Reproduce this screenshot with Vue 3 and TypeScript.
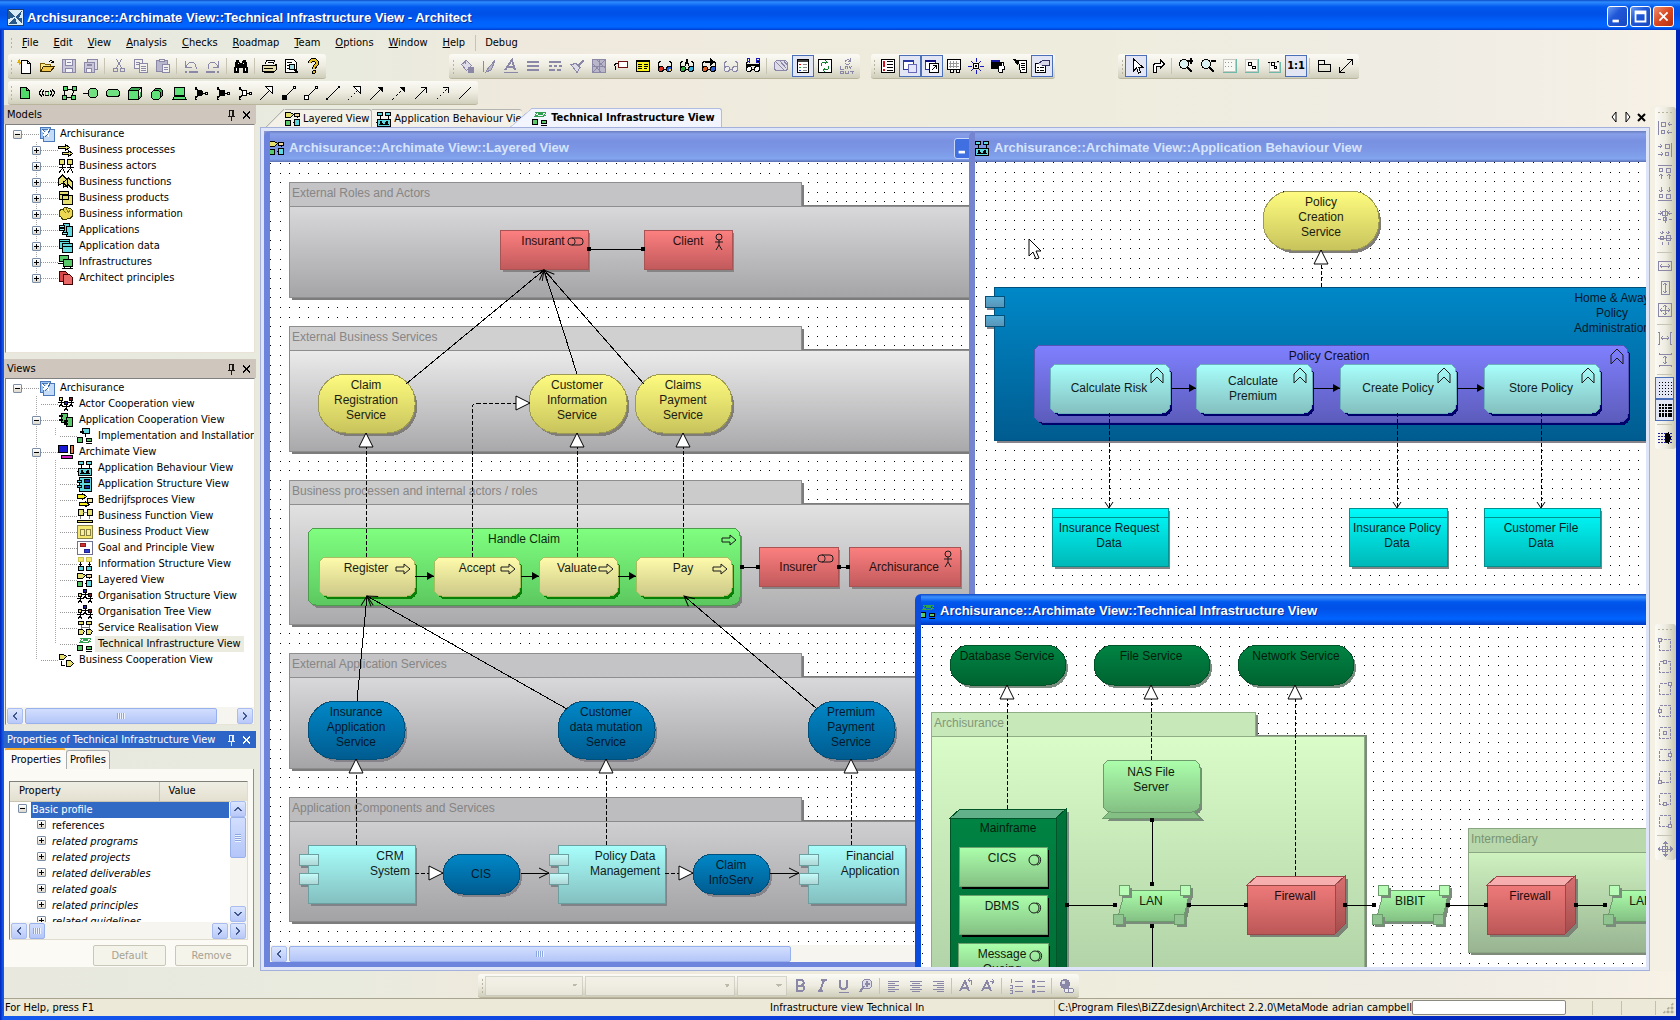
<script setup lang="ts">
const p = (d: string, s = '#000', f = 'none', w = 1) =>
  `<path d="${d}" stroke="${s}" fill="${f}" stroke-width="${w}"/>`
const G = '#8a88a6'
const glasses = (l: string, r: string, s = '#000', extra = '') =>
  p('M1.5 9V5l2-2M14.5 9V5l-2-2M7 11h2', s) +
  `<circle cx="4" cy="11" r="2.5" fill="${l}" stroke="${s}"/><circle cx="12" cy="11" r="2.5" fill="${r}" stroke="${s}"/>` + extra
const man = (x: number, y: number, c: string) =>
  `<circle cx="${x}" cy="${y}" r="2" fill="${c}" stroke="#000"/>` +
  p(`M${x} ${y + 2}v3M${x - 3} ${y + 3}h6M${x} ${y + 5}l-2 3M${x} ${y + 5}l2 3`)
const box = (x: number, y: number, w: number, h: number, f: string, s = '#000') =>
  `<rect x="${x}.5" y="${y}.5" width="${w}" height="${h}" fill="${f}" stroke="${s}"/>`
const oval = (x: number, y: number, f: string) =>
  `<ellipse cx="${x}" cy="${y}" rx="3" ry="2" fill="${f}" stroke="#000"/>`
const magnifier = p('M9 9l5 5', '#000', 'none', 2) +
  '<circle cx="6" cy="6" r="4.5" fill="#d8f0f0" stroke="#000"/>'
const corner = (x: number, y: number) =>
  `<rect x="2.5" y="2.5" width="11" height="11" fill="none" stroke="${G}" stroke-dasharray="3 1"/><rect x="${x}.5" y="${y}.5" width="3" height="3" fill="#ece9d8" stroke="${G}"/>`
const Y = '#e6e070', C = '#5fd8e0', N = '#58c868', R = '#d84848'

const icons: Record<string, string> = {
  app: '<rect width="16" height="16" fill="#d8ecf8" stroke="#20406a"/><path d="M1 1l7 7-7 2zM15 1l-2 7-5 0zM8 8l2 7H1zM8 8l7 1v6z" fill="#2a5a8c"/>',
  chevL: p('M10 4L6 8l4 4', '#40588c', 'none', 2),
  chevR: p('M6 4l4 4-4 4', '#40588c', 'none', 2),
  chevU: p('M4 10l4-4 4 4', '#40588c', 'none', 2),
  chevD: p('M4 6l4 4 4-4', '#40588c', 'none', 2),
  new: p('M4.5 2.5h6l3 3v10h-9z', '#000', '#fff') + p('M10.5 2.5v3h3') + p('M0 4.500h4M2.500 1v6M1 2l3 4', '#e0b000'),
  open: p('M1.5 13.5v-8h4l1 1h5v2', '#7a5a00', '#f8e890') + p('M1.5 13.5l3-5h11l-4 5z', '#3a2a00', '#f0c850') + p('M10 4c2-3 4-1 4 1M12 4l2 1 1-2'),
  save: p('M1.5 1.5h13v13h-13z', G, '#c8c6d8') + box(4, 1, 7, 6, '#f4f4f8', G) + box(4, 10, 7, 4, '#f4f4f8', G) + p('M6 4.500h4', G),
  saveAll: p('M4.5 1.5h10v10h-10z', G, '#dddce8') + p('M1.5 4.5h10v10h-10z', G, '#c8c6d8') + box(3, 10, 5, 4, '#f4f4f8', G) + p('M4 6.500h5', G, 'none', 2),
  cut: p('M5.500 1l5 9M10.500 1l-5 9', G) + `<circle cx="4.500" cy="12" r="2" fill="none" stroke="${G}"/><circle cx="11.500" cy="12" r="2" fill="none" stroke="${G}"/>`,
  copy: box(1, 1, 8, 9, '#f2f1ee', G) + box(6, 5, 8, 9, '#f2f1ee', G) + p('M8 8.500h5M8 10.500h5M8 12.500h5M3 4.500h4M3 6.500h3', G),
  paste: box(1, 2, 11, 11, '#b8b6cc', G) + box(4, 1, 5, 2, '#eee', G) + box(7, 6, 7, 8, '#f2f1ee', G) + p('M9 9.500h4M9 11.500h4', G),
  undo: p('M2.500 3v6h6M3 9c2-6 10-6 10 0v2', G) + p('M2 14h2M6 14h9', G, 'none', 2),
  redo: p('M13.500 3v6h-6M13 9c-2-6-10-6-10 0v2', G) + p('M1 14h9M12 14h2', G, 'none', 2),
  find: '<path d="M3 2h3l1 3h2l1-3h3l2 9v4h-5v-5H6v5H1v-4z"/>' + p('M3.500 10v3M12.500 10v3M5 5h1M10 5h1', '#fff'),
  print: p('M4 6l2-4h8l-2 4', '#000', '#fff') + p('M1.5 7.5h12l2-1v5l-2 2h-12z', '#000', '#e4dca8') + p('M3 10.500h9M3 14.500h10M7 4.500h5'),
  preview: p('M2.500 1.500h8l3 3v10h-11z', '#000', '#fff') + p('M4 4.500h5M4 7.500h3M4 10.500h3') + '<circle cx="9" cy="9" r="3" fill="#a8e0e8" stroke="#000"/>' + p('M11 11l4 4', '#000', 'none', 2),
  help: p('M5 5c0-4 7-4 7 0 0 3-3 2-3 6', '#000', 'none', 4) + p('M5 5c0-4 7-4 7 0 0 3-3 2-3 6', '#e8c020', 'none', 2) + '<circle cx="9" cy="14" r="1.500" fill="#e8c020" stroke="#000"/>',
  artifact: p('M3.500 2.500h6l3 3v8h-9z', '#000', '#50d868') + p('M9.500 2.500v3h3'),
  path: p('M3 4L0 8l3 4M5 5L3 8l2 3M13 4l3 4-3 4M11 5l2 3-2 3') + '<path d="M6 7h1v3H6zM9 7h1v3H9z" fill="#30a848"/>' + p('M6 6.500h4M6 10.500h4'),
  network: p('M4 4.500h8M12.500 4l-1 8M3.500 4v8M3 12.500h9') + box(2, 1, 4, 4, '#50d868') + box(11, 1, 4, 4, '#50d868') + box(1, 10, 4, 4, '#50d868') + box(10, 10, 4, 4, '#50d868'),
  iface: p('M0 8.500h6') + '<circle cx="10" cy="8" r="5" fill="#70e080" stroke="#000"/>',
  service: '<rect x="1.500" y="4.500" width="13" height="7" rx="3" fill="#70e080" stroke="#000"/>',
  node: p('M1.500 5.500h10v9h-10z', '#000', '#60e078') + p('M1.500 5.500l3-3h10l-3 3zM11.500 14.500l3-3v-9', '#000', '#3aa850'),
  sysware: '<circle cx="9" cy="8" r="5" fill="#3aa850" stroke="#000"/><circle cx="7" cy="10" r="5" fill="#60e078" stroke="#000"/>',
  device: '<rect x="3.500" y="2.500" width="10" height="8" rx="1" fill="#60e078" stroke="#000"/>' + p('M1.500 14.500l2-3h10l2 3z', '#000', '#60e078'),
  junA: p('M2 2l4 5M2 14l4-5M2 2v3M2 14v-3M8 8.500h4M2 2h2M2 14h2') + '<circle cx="7" cy="8" r="3"/>' + box(12, 7, 2, 2, '#fff'),
  junB: p('M2 2l4 5M2 14l4-5M2 2v3M2 14v-3M8 8.500h4M2 2h2M2 14h2') + '<rect x="4" y="5" width="6" height="6"/>' + box(12, 7, 2, 2, '#fff'),
  junC: p('M2 2l4 5M2 14l4-5M2 2v3M2 14v-3M8 8.500h4M2 2h2M2 14h2') + box(5, 5, 4, 5, '#fff') + box(12, 7, 2, 2, '#fff'),
  specialise: p('M1 15L10 6') + p('M6.500 1.500h7v7z', '#000', '#fff'),
  compose: p('M3 13L13 3') + '<rect x="1" y="10" width="5" height="5"/>' + box(12, 1, 2, 2, '#fff'),
  aggregate: p('M5 11L13 3') + box(1, 10, 4, 4, '#fff') + box(12, 1, 2, 2, '#fff'),
  assign: p('M2 14L14 2') + '<rect x="1" y="13" width="2" height="2"/><rect x="13" y="1" width="2" height="2"/>',
  realise: '<path d="M1 15L10 6" stroke="#000" stroke-dasharray="2 2"/>' + p('M6.500 1.500h7v7z', '#000', '#fff'),
  trigger: p('M1 15L12 4') + '<path d="M8 2h6v6z"/>',
  flow: '<path d="M1 15L12 4" stroke="#000" stroke-dasharray="3 2"/><path d="M8 2h6v6z"/>',
  use: p('M2 14L13 3M8 2.500h5.500V8'),
  access: '<path d="M2 14L13 3" stroke="#000" stroke-dasharray="2 2"/>' + p('M8 2.500h5.500V8'),
  associate: p('M2 14L14 2'),
  fill: p('M2.500 6.500l5-4 5 5-5 5z', G, '#dddce8') + p('M6.500 6V2', G) + `<path d="M9 9h6v6H9z" fill="${G}"/>`,
  pen: p('M2.500 3v11M14 2L8 10', G) + p('M8 9l-3 5 5-2 4-9', G, '#b8b6c8'),
  fontA: p('M2 12L9 2l3 10M5 9h6', G, 'none', 2) + p('M1 14.500h14', G),
  lines: p('M2 4h12M2 8h12M2 12h12', G, 'none', 2),
  dashes: p('M2 4h12M2 8h3M7 8h3M12 8h3M2 12h6M10 12h4', G, 'none', 2),
  brush: p('M9 7l5-5 1 1-5 5', G, G) + p('M2 6.500l5-1 4 4-3 5-6-8z', G, '#dddce8'),
  pattern: box(1, 1, 13, 13, '#b8b6c8', G) + p('M1 5l9 9M5 1l9 9M14 2L2 14M8.500 1v13M1 8.500h13', G),
  tag: p('M3 12C0 4 4 5 6 5') + '<rect x="5.500" y="3.500" width="9" height="6" rx="1" fill="#fff" stroke="#701010"/>',
  note: box(1, 2, 13, 11, '#f8f020') + p('M3 6.500h4M9 6.500h4M3 8.500h4M9 8.500h4M3 10.500h4M9 10.500h3M2 3.500h12'),
  glassesRgb: glasses('#e03020', '#2060e0', '#000', '<circle cx="13" cy="12" r="1.500" fill="#f0d020"/>'),
  glassesA: glasses('#30b040', '#30b0e0', '#000', p('M6 8l2-7 2 7M7 5h3')),
  glassesArrow: glasses('#e06020', '#3060d0', '#000', p('M4 4h7', '#000', 'none', 2) + '<path d="M9 0l5 4-5 4z"/>'),
  glassesGray: glasses('#eee', '#eee', G),
  glassesAb: glasses('#fff', '#fff', '#000', p('M2 5l1-5h1l1 5M2 3h3M11.500 0v4h3V0zM11 2h3', '#1818c0') + p('M1 7h14', '#000', 'none', 2)),
  hatch: `<rect x="1.500" y="2.500" width="13" height="10" rx="3" fill="#dddce8" stroke="${G}"/>` + p('M3 4l8 8M7 3l6 7M11 3l3 4', G),
  legend: box(2, 1, 11, 13, '#fff') + '<path d="M3 2h10v2H3z" fill="#404040"/><path d="M4 6h2v1H4z" fill="red"/><path d="M4 9h2v1H4z" fill="#28b040"/><path d="M4 12h2v1H4z" fill="#2040e0"/>' + p('M8 6.500h4M8 9.500h4M8 12.500h4', '#888'),
  refresh: box(1, 1, 13, 13, '#fff') + p('M4.500 8V6c0-2 3-2 6-2M8 2l2 2-2 2M11.500 8v2c0 2-3 2-6 2M8 10l-2 2 2 2', '#108030'),
  relayout: p('M6 4c1-3 4-3 5-1M11 0v3H9M11 5c-1 2-4 2-5 0', G) + p('M1.500 8v3h3M6 11V8h2v3M10 8l1 2 2-2M11 10v1M1.500 13h3v2h-3zM6.500 13v2h3v-2M11 13h4M13 13v3', G),
  report: box(1, 1, 13, 13, '#fff') + p('M7 3.500h6M7 6.500h6M7 9.500h6M7 12.500h6') + p('M4 3v6M3 12h2', '#d01020', 'none', 2),
  winA: box(1, 2, 10, 9, '#fff', '#2838a0') + p('M1 3h11', '#2838a0', 'none', 2) + box(6, 6, 8, 8, '#e4e4fa', '#6868b8'),
  winB: box(1, 2, 10, 9, '#fff', '#2838a0') + p('M1 3h11', '#101080', 'none', 2) + box(5, 5, 9, 9, '#fff') + p('M8 12l4-4M9 7.500h3.500V11'),
  gridWin: box(1, 1, 13, 10, '#fff') + p('M4.500 3v7M7.500 3v7M10.500 3v7M3 5.500h10M3 8.500h10', '#999') + box(4, 11, 3, 3, '#fff') + box(10, 11, 3, 3, '#fff'),
  crosshair: '<circle cx="8" cy="8" r="3" fill="#fff" stroke="#000"/>' + p('M8.500 0v4M8.500 12v4M0 8.500h4M12 8.500h4M3 3l2 2M11 11l2 2M13 3l-2 2M3 13l2-2', '#1818c0') + '<circle cx="8" cy="8" r="1"/>',
  profile: '<path d="M1 2h9v9H1z"/><path d="M1 2h9v2H1z" fill="#1818a0"/>' + p('M8 4h5l1 4v3h-2v3H9l-1-4z', '#000', '#fff') + '<path d="M8 4h4v4H8z"/>',
  script: p('M6.500 2.500h8v12h-6z', '#000', '#fff') + '<path d="M1 1l5 1v6z"/>' + p('M9 5.500h4M9 7.500h4M9 9.500h4M10 11.500h3'),
  props: box(1, 5, 10, 9, '#fff') + p('M3 9.500h2M6 9.500h4M3 12.500h2M6 12.500h4') + p('M4 6l5-4h6v5h-4l-3 1', '#303060', '#d8d8ea'),
  pointer: p('M5.500 1v12l3-3 2 5 2-1-2-5h4z', '#000', '#fff'),
  bend: p('M3.500 14v-7l2-2h5V2l4 4-4 4V8h-4v6z', '#000', '#fff'),
  zoomIn: magnifier + p('M10 3h5M12.500 0v6', '#000', 'none', 2),
  zoomOut: magnifier + p('M11 3h5', '#000', 'none', 2),
  fitA: box(1, 1, 12, 12, '#f8f8f4', '#c8c8c0') + p('M1 14.500h13.500V1', '#70b8a8') + p('M3 4.500h1M6 4.500h1M9 4.500h1M3 8.500h1M6 8.500h1M9 8.500h1', '#999'),
  fitB: box(1, 1, 12, 12, '#f8f8f4', '#c8c8c0') + p('M1 14.500h13.500V1', '#70b8a8') + box(4, 4, 3, 3, '#fff') + box(8, 8, 3, 2, '#fff'),
  fitC: box(3, 4, 10, 9, '#f8f8f4', '#c8c8c0') + p('M3 14.500h11.500V4', '#70b8a8') + p('M2 4.500h2M11 3.500h2') + box(5, 4, 3, 3, '#fff') + box(8, 8, 2, 2, '#fff'),
  pkg: p('M2.500 2.500h6v4h6v7h-12zM2.500 6.500h6'),
  diag: p('M2 14L14 2M9 1.500h5.500V7M1.500 9v5.500H7'),
  root: box(1, 1, 10, 11, '#9cc4f0', '#4a78b8') + box(4, 3, 11, 12, '#c4dcf8', '#4a78b8') + p('M3 4l7 6M10 4l-6 6', '#fff', 'none', 2) + p('M3 3l3 3M11 4l-2 3M6 11l3-3', '#3a68a8'),
  process: p('M.5 4.500h7v-2l4 3-4 3v-2h-7zM4.500 10.500h6v-2l4 3-4 3v-2h-6z', '#000', Y),
  actors: '<circle cx="4" cy="4" r="3" fill="#e6e070" stroke="#000"/><circle cx="12" cy="4" r="3" fill="#e6e070" stroke="#000"/>' + p('M4.500 7v4M1 9.500h7M4 11l-3 4M5 11l2 4M12.500 7v4M9 9.500h7M12 11l-3 4M13 11l2 4'),
  functions: p('M.5 11V5l4-4 5 5v7l-4-4zM5.500 13V8l5-4 4 4v7l-4-4z', '#000', Y),
  products: box(1, 1, 9, 8, Y) + box(4, 5, 10, 9, Y) + p('M1 4.500h9M4 9.500h6V5'),
  info: p('M2 8c-2-3 1-5 3-4 1-4 5-3 6-1 4-1 4 3 3 4 2 4-2 6-4 5-2 3-6 2-7-1-2 0-2-2-1-3z', '#3a3a00', '#ecd850') + p('M5 4l3 3M8 2l2 4M12 4l-2 3', '#8a7a20'),
  applications: box(5, 1, 6, 9, C) + box(8, 4, 6, 10, C) + box(1, 3, 5, 2, '#9ff0f0') + box(1, 6, 5, 2, '#9ff0f0') + box(4, 10, 5, 2, '#9ff0f0'),
  appData: box(1, 1, 10, 9, C) + box(4, 5, 10, 9, C) + p('M1 3.500h10M4 8.500h10'),
  infra: box(1, 1, 9, 6, N) + box(5, 5, 9, 7, N) + p('M0 9.500h5M4 14.500h11M6 12v2M12 12v2'),
  principle: p('M1.500 1.500h6l3 3v7h-9z', '#400', R) + p('M5.500 4.500h6l3 3v7h-9z', '#400', '#e86868'),
  actorCoop: man(3, 3, Y) + man(13, 3, '#802020') + man(8, 7, '#2020a0'),
  appCoop: box(3, 1, 6, 9, N) + box(8, 5, 6, 9, N) + box(1, 3, 3, 1, '#9fe') + box(1, 7, 3, 1, '#9fe') + box(6, 8, 3, 1, '#9fe') + box(6, 11, 3, 1, '#9fe'),
  impl: box(5, 0, 7, 5, C) + box(0, 9, 5, 5, N) + oval(12, 12, N) + p('M3 4h3M8.500 6v3M9 15.500h6') + box(3, 3, 3, 1, C),
  archimate: box(0, 1, 9, 7, '#1818d0') + box(12, 1, 3, 8, '#f07838') + box(3, 11, 11, 3, '#d020c0'),
  behaviour: oval(4, 3, C) + oval(12, 3, C) + box(1, 8, 13, 7, C) + '<path d="M3 14l2-5 3 5zM8 14l3-5 2 5z"/>' + p('M4.500 5v4M12.500 5v4M0 11.500h2'),
  structure: box(2, 1, 12, 14, C) + box(7, 3, 5, 3, '#1030a0') + box(7, 9, 5, 3, '#1030a0') + box(0, 4, 4, 2, C) + box(0, 9, 4, 2, C),
  bedrijf: p('M.5 2.500h5v-1l4 3-4 3v-1h-5zM2.500 10.500h6v-1l4 3-4 2v-1h-6z', '#000', '#f8f020') + box(10, 6, 5, 4, '#f0e8a0'),
  bFunction: box(1, 1, 5, 6, Y) + box(10, 1, 5, 6, Y) + box(0, 12, 15, 2, Y) + p('M6 4.500h4M3.500 8v3M12.500 8v3', '#777'),
  bProduct: box(0, 1, 15, 13, '#f4e870', '#8a8240') + box(3, 5, 4, 6, '#f8f0a0', '#8a8240') + box(9, 5, 4, 6, '#f8f0a0', '#8a8240'),
  goal: box(0, 1, 15, 13, '#fff', '#707090') + p('M3.500 3.500h5v3h-5z', '#902020', '#d03030') + p('M7.500 9.500h5v3h-5z', '#202090', '#3040d0'),
  infoStruct: box(1, 1, 5, 4, '#f4e870', '#c8c050') + box(9, 1, 5, 4, '#f4e870', '#c8c050') + p('M3.500 6v4M12.500 6v4M2 8.500h3M11 8.500h3') + box(1, 10, 5, 4, C) + box(9, 10, 5, 4, C),
  layered: p('M.5 1.500h5l3 2-3 3h-5z', '#000', Y) + oval(12, 4, '#f0d8a0') + box(0, 9, 5, 5, N) + box(9, 8, 5, 6, C) + p('M8 11.500h2M12 7V6'),
  orgS: man(3, 7, Y) + man(8, 3, '#2020a0') + man(13, 7, '#802020'),
  serviceReal: oval(4, 3, Y) + oval(12, 3, Y) + p('M4.500 5v4M12.500 5v4M4 7.500h8', '#777') + p('M1.500 9.500h4l2 2-2 3h-4zM9.500 9.500h4l2 2-2 3h-4z', '#000', Y),
  tech: p('M3 6l2-4h9l-2 4zM3 2l11 4M3 6L14 2', '#30a050') + box(0, 9, 5, 5, N) + oval(12, 12, N) + p('M9 15.500h6'),
  bCoop: p('M1.500 2.500h4l3 2-3 3h-4zM8.500 8.500h4l3 3-3 3h-4z', '#000', Y) + p('M3.500 9v4h3M10 3.500h3'),
  pin: p('M4 9.500h8M5.500 9V2.500h5V9M9.500 3v6M8.500 10v5', 'currentColor'),
  close: p('M4 4l8 8M12 4l-8 8', 'currentColor', 'none', 2),
  bold: p('M5 2v11h4c4 0 4-5 0-5.500 4-1 3-5.500 0-5.500zM5 7.500h4', G, 'none', 2),
  italic: p('M10 2L6 13M7 2h6M4 13h5', G, 'none', 2),
  underline: p('M4 2v6c0 4 7 4 7 0V2', G, 'none', 2) + p('M3 14.500h10', G),
  color: `<circle cx="9" cy="6" r="5" fill="#dddce8" stroke="${G}"/>` + p('M6 8l-4 6M9 3v6M7 6h5', G, 'none', 2),
  alignL: p('M2 3.500h11M2 5.500h7M2 7.500h11M2 9.500h7M2 11.500h11M2 13.500h7', G),
  alignC: p('M2 3.500h12M4 5.500h8M2 7.500h12M4 9.500h8M2 11.500h12M4 13.500h8', G),
  alignR: p('M3 3.500h11M7 5.500h7M3 7.500h11M7 9.500h7M3 11.500h11M7 13.500h7', G),
  fontUp: p('M2 13L7 3l4 10M4 10h6', G, 'none', 2) + p('M10 2.500h3.500V7M12 0l-2 2 2 2', G),
  fontDown: p('M2 13L7 3l4 10M4 10h6', G, 'none', 2) + p('M10 3.500h4M12 1l2 2-2 3', G),
  numbered: p('M7 3.500h8M7 8.500h8M7 13.500h8M3.500 1v4M2 7.500h2v3H2M2 12.500h2v3H2', G),
  bullets: p('M7 3.500h8M7 8.500h8M7 13.500h8', G) + `<path d="M2 2h3v3H2zM2 7h3v3H2zM2 12h3v3H2z" fill="${G}"/>`,
  globe: `<circle cx="7" cy="6" r="5" fill="${G}"/><path d="M4 3h3v3H4z" fill="#dddce8"/><rect x="6.500" y="10.500" width="5" height="4" rx="2" fill="#eee" stroke="${G}"/><rect x="10.500" y="10.500" width="5" height="4" rx="2" fill="#eee" stroke="${G}"/>`,
  alLeft: p('M1.500 1v14M15 4.500h-4M13 2l-2 2 2 2M15 12.500h-5M12 10l-2 2 2 2', G) + box(4, 2, 4, 4, 'none', G) + `<circle cx="6" cy="12" r="2" fill="none" stroke="${G}"/>`,
  alRight: p('M14.500 1v14M1 4.500h4M3 2l2 2-2 2M1 12.500h5M4 10l2 2-2 2', G) + box(8, 2, 4, 4, 'none', G) + `<circle cx="10" cy="12" r="2" fill="none" stroke="${G}"/>`,
  alTop: p('M1 1.500h14M4.500 15v-5M2 12l2-2 2 2M12.500 15v-5M10 12l2-2 2 2', G) + box(9, 4, 4, 4, 'none', G) + `<circle cx="4" cy="6" r="2" fill="none" stroke="${G}"/>`,
  alBottom: p('M1 14.500h14M4.500 1v5M2 4l2 2 2-2M12.500 1v5M10 4l2 2 2-2', G) + box(9, 8, 4, 4, 'none', G) + `<circle cx="4" cy="10" r="2" fill="none" stroke="${G}"/>`,
  alMidH: p('M8.500 1v14M1 5.500h3M15 5.500h-3M1 11.500h3M15 11.500h-3M3 3l2 2-2 2M13 3l-2 2 2 2', G) + box(5, 3, 5, 4, 'none', G) + `<circle cx="8" cy="11" r="2" fill="none" stroke="${G}"/>`,
  alMidV: p('M1 8.500h14M5.500 1v3M5.500 15v-3M11.500 1v3M11.500 15v-3M3 2l2 2 2-2M9 2l2 2 2-2', G) + box(9, 5, 4, 5, 'none', G) + `<circle cx="5" cy="8" r="2" fill="none" stroke="${G}"/>`,
  sizeW: box(1, 3, 13, 9, 'none', G) + p('M3 8.500h10M5 6L3 8l2 2M11 6l2 2-2 2', G),
  sizeH: box(4, 1, 8, 13, 'none', G) + p('M8.500 3v10M6 5l2-2 2 2M6 11l2 2 2-2', G),
  sizeB: box(1, 1, 13, 13, 'none', G) + p('M8.500 3v10M3 8.500h10M6 5l2-2 2 2M6 11l2 2 2-2M5 6L3 8l2 2M11 6l2 2-2 2', G),
  distH: p('M1 2.500h1.500v12H1M15 2.500h-1.500v12H15M4 8.500h8M6 6L4 8l2 2M10 6l2 2-2 2', G),
  distV: p('M2.500 1v1.500h12V1M2.500 15v-1.500h12V15M8.500 4v8M6 6l2-2 2 2M6 10l2 2 2-2', G),
  gridDots: '<path d="M2 2.500h13M2 5.500h13M2 8.500h13M2 11.500h13M2 14.500h13" stroke="#000" stroke-dasharray="1 2"/>',
  gridFull: '<path d="M2 2h13v13H2z"/><path d="M2 4.500h13M2 7.500h13M2 10.500h13M4.500 2v13M7.500 2v13M10.500 2v13" stroke="#e2e6f4"/>',
  snap: '<path d="M1 3.500h14M1 6.500h14M1 9.500h14M1 12.500h14" stroke="#2020a0" stroke-dasharray="2 1"/><path d="M8 4l4-2 2 6-2 6-4-2z"/>',
  cTL: corner(1, 1), cT: corner(6, 1), cTR: corner(11, 1), cL: corner(1, 6), cC: corner(6, 6),
  cR: corner(11, 6), cBL: corner(1, 11), cB: corner(6, 11), cBR: corner(11, 11),
  move: `<path d="M8 0l3 3H5zM8 16l3-3H5zM0 8l3-3v6zM16 8l-3-3v6z" fill="${G}"/>` + p('M8.500 2v12M2 8.500h12M5.500 5.500h5v5h-5z', G),
}

const menus = ['File', 'Edit', 'View', 'Analysis', 'Checks', 'Roadmap', 'Team', 'Options', 'Window', 'Help']

// "|" is a separator, a leading "*" marks a pressed button
const bars = {
  standard: 'new open save saveAll | cut copy paste | undo redo | find | print preview help'.split(' '),
  style: 'fill pen fontA lines dashes brush pattern tag note glassesRgb glassesA glassesArrow glassesGray glassesAb | hatch *legend refresh relayout'.split(' '),
  panes: 'report *winA *winB gridWin crosshair profile script *props'.split(' '),
  zoom: '*pointer bend | zoomIn zoomOut fitA fitB fitC *one | pkg diag'.split(' '),
  shapes: 'artifact path network iface service node sysware device junA junB junC specialise compose aggregate assign realise trigger flow use access associate'.split(' '),
  align: 'alLeft alRight alTop alBottom alMidH alMidV | sizeW sizeH sizeB | distH distV | *gridDots *gridFull | snap'.split(' '),
  anchor: 'cTL cT cTR cL cC cR cBL cB cBR | move'.split(' '),
  text: 'bold italic underline color | alignL alignC alignR | fontUp fontDown | numbered bullets | globe'.split(' '),
}
const topBars = [
  { name: 'standard', items: bars.standard },
  { name: 'style', items: bars.style },
  { name: 'panes', items: bars.panes },
  { name: 'zoom', items: bars.zoom },
]
const bare = (s: string) => s.replace('*', '')

interface Row { label: string; icon: string; level: number; box?: string; last?: boolean; selected?: boolean }
const models: Row[] = [
  { label: 'Archisurance', icon: 'root', level: 0, box: '-' },
  { label: 'Business processes', icon: 'process', level: 1, box: '+' },
  { label: 'Business actors', icon: 'actors', level: 1, box: '+' },
  { label: 'Business functions', icon: 'functions', level: 1, box: '+' },
  { label: 'Business products', icon: 'products', level: 1, box: '+' },
  { label: 'Business information', icon: 'info', level: 1, box: '+' },
  { label: 'Applications', icon: 'applications', level: 1, box: '+' },
  { label: 'Application data', icon: 'appData', level: 1, box: '+' },
  { label: 'Infrastructures', icon: 'infra', level: 1, box: '+' },
  { label: 'Architect principles', icon: 'principle', level: 1, box: '+', last: true },
]
const views: Row[] = [
  { label: 'Archisurance', icon: 'root', level: 0, box: '-' },
  { label: 'Actor Cooperation view', icon: 'actorCoop', level: 1 },
  { label: 'Application Cooperation View', icon: 'appCoop', level: 1, box: '-' },
  { label: 'Implementation and Installation View', icon: 'impl', level: 2, last: true },
  { label: 'Archimate View', icon: 'archimate', level: 1, box: '-' },
  { label: 'Application Behaviour View', icon: 'behaviour', level: 2 },
  { label: 'Application Structure View', icon: 'structure', level: 2 },
  { label: 'Bedrijfsproces View', icon: 'bedrijf', level: 2 },
  { label: 'Business Function View', icon: 'bFunction', level: 2 },
  { label: 'Business Product View', icon: 'bProduct', level: 2 },
  { label: 'Goal and Principle View', icon: 'goal', level: 2 },
  { label: 'Information Structure View', icon: 'infoStruct', level: 2 },
  { label: 'Layered View', icon: 'layered', level: 2 },
  { label: 'Organisation Structure View', icon: 'orgS', level: 2 },
  { label: 'Organisation Tree View', icon: 'orgS', level: 2 },
  { label: 'Service Realisation View', icon: 'serviceReal', level: 2 },
  { label: 'Technical Infrastructure View', icon: 'tech', level: 2, last: true, selected: true },
  { label: 'Business Cooperation View', icon: 'bCoop', level: 1, last: true },
]
const panels = [
  { title: 'Models', rows: models, scroll: false },
  { title: 'Views', rows: views, scroll: true },
]
const related = ['references', 'related programs', 'related projects', 'related deliverables', 'related goals', 'related principles', 'related guidelines']

// grid points fall every 48/5 px, rounded to whole pixels
const steps = [0, 10, 19, 29, 38]
const dots = steps.flatMap(y => steps.map(x => `M${x} ${y}h1v1h-1z`)).join('')

interface Group { x: number; y: number; tab: number; w: number; h: number; title: string; tone: string }
interface Glyph { k: string; x: number; y: number }
interface Shape {
  k: string; x: number; y: number; w: number; h: number; r?: number; tone: string
  text: string[]; tx: number; ty: number; glyph?: Glyph
}
interface Wire { d: string; end?: string; start?: string; dash?: boolean }
interface Sheet { name: string; title: string; icon: string; ox: number; oy: number; dx: number; dy: number; scroll?: boolean; groups: Group[]; shapes: Shape[]; wires: Wire[] }

const glyphs: Record<string, string> = {
  role: '<rect x="0" y="0" width="15" height="7" rx="3"/><path d="M4 0c4 0 4 7 0 7"/>',
  actor: '<circle cx="4" cy="3" r="3"/><path d="M4 6v5M0 8h8M4 11l-3 5M4 11l3 5"/>',
  arrow: '<path d="M0 3h8V0l6 5-6 5V7H0z"/>',
  chevron: '<path d="M0 15V6l6-6 6 6v9l-6-6z"/>',
  disc: '<circle cx="5" cy="6" r="5"/><path d="M7 1c6 0 6 9 1 10"/>',
}

const s = (k: string, x: number, y: number, w: number, h: number, tone: string, text: string[], tx: number, ty: number, r = 0, glyph?: Glyph): Shape =>
  ({ k, x, y, w, h, tone, text, tx, ty, r, glyph })

const layered: Sheet = {
  name: 'layered', title: 'Archisurance::Archimate View::Layered View', icon: 'layered', ox: 270, oy: 162, dx: 270, dy: 163, scroll: true,
  groups: [
    { x: 289, y: 182, tab: 512, w: 900, h: 115, title: 'External Roles and Actors', tone: 'gray' },
    { x: 289, y: 326, tab: 512, w: 900, h: 125, title: 'External Business Services', tone: 'pale' },
    { x: 289, y: 480, tab: 512, w: 900, h: 144, title: 'Business processen and internal actors / roles', tone: 'soft' },
    { x: 289, y: 653, tab: 512, w: 900, h: 115, title: 'External Application Services', tone: 'gray' },
    { x: 289, y: 797, tab: 512, w: 900, h: 124, title: 'Application Components and Services', tone: 'dim' },
  ],
  shapes: [
    s('box', 500, 230, 88, 39, 'red', ['Insurant'], 543, 245, 0, { k: 'role', x: 568, y: 238 }),
    s('box', 644, 230, 88, 39, 'red', ['Client'], 688, 245, 0, { k: 'actor', x: 715, y: 234 }),
    s('box', 318, 374, 97, 59, 'yellow', ['Claim', 'Registration', 'Service'], 366, 389, 28),
    s('box', 529, 374, 98, 59, 'yellow', ['Customer', 'Information', 'Service'], 577, 389, 28),
    s('box', 635, 374, 97, 59, 'yellow', ['Claims', 'Payment', 'Service'], 683, 389, 28),
    s('box', 308, 528, 432, 77, 'lime', ['Handle Claim'], 524, 543, 8, { k: 'arrow', x: 722, y: 535 }),
    s('box', 319, 557, 96, 39, 'cream', ['Register'], 366, 572, 8, { k: 'arrow', x: 396, y: 564 }),
    s('box', 434, 557, 86, 39, 'cream', ['Accept'], 477, 572, 8, { k: 'arrow', x: 501, y: 564 }),
    s('box', 539, 557, 79, 39, 'cream', ['Valuate'], 577, 572, 8, { k: 'arrow', x: 599, y: 564 }),
    s('box', 636, 557, 96, 39, 'cream', ['Pay'], 683, 572, 8, { k: 'arrow', x: 713, y: 564 }),
    s('box', 759, 547, 79, 39, 'red', ['Insurer'], 798, 571, 0, { k: 'role', x: 818, y: 555 }),
    s('box', 849, 547, 111, 39, 'red', ['Archisurance'], 904, 571, 0, { k: 'actor', x: 944, y: 551 }),
    s('box', 308, 701, 97, 58, 'blue', ['Insurance', 'Application', 'Service'], 356, 716, 28),
    s('box', 558, 701, 97, 58, 'blue', ['Customer', 'data mutation', 'Service'], 606, 716, 28),
    s('box', 808, 701, 87, 58, 'blue', ['Premium', 'Payment', 'Service'], 851, 716, 28),
    s('comp', 308, 845, 107, 58, 'aqua', ['CRM', 'System'], 390, 860),
    s('box', 443, 854, 77, 40, 'blue', ['CIS'], 481, 878, 20),
    s('comp', 558, 845, 107, 58, 'aqua', ['Policy Data', 'Management'], 625, 860),
    s('box', 693, 854, 77, 40, 'blue', ['Claim', 'InfoServ'], 731, 869, 20),
    s('comp', 808, 845, 97, 58, 'aqua', ['Financial', 'Application'], 870, 860),
  ],
  wires: [
    { d: 'M589 249H643', start: 'sq', end: 'sq' },
    { d: 'M406 384L544 270', end: 'open' },
    { d: 'M577 374L544 270', end: 'open' },
    { d: 'M644 384L544 270', end: 'open' },
    { d: 'M366 557V433', end: 'tri', dash: true },
    { d: 'M472 557V409Q472 403 478 403H530', end: 'tri', dash: true },
    { d: 'M577 557V433', end: 'tri', dash: true },
    { d: 'M683 557V433', end: 'tri', dash: true },
    { d: 'M415 576H434', end: 'solid' },
    { d: 'M521 576H539', end: 'solid' },
    { d: 'M618 576H636', end: 'solid' },
    { d: 'M742 567H758', start: 'sq', end: 'sq' },
    { d: 'M839 567H848', start: 'sq', end: 'sq' },
    { d: 'M357 701L367 596', end: 'open' },
    { d: 'M567 709L367 596', end: 'open' },
    { d: 'M816 708L684 596', end: 'open' },
    { d: 'M356 845V759', end: 'tri', dash: true },
    { d: 'M606 845V759', end: 'tri', dash: true },
    { d: 'M851 845V759', end: 'tri', dash: true },
    { d: 'M415 873H443', end: 'tri', dash: true },
    { d: 'M665 873H693', end: 'tri', dash: true },
    { d: 'M521 873H549', end: 'open' },
    { d: 'M770 873H799', end: 'open' },
  ],
}

const behaviour: Sheet = {
  name: 'behaviour', title: 'Archisurance::Archimate View::Application Behaviour View', icon: 'behaviour', ox: 975, oy: 162, dx: 976, dy: 162,
  groups: [],
  shapes: [
    s('box', 1263, 191, 116, 59, 'yellow', ['Policy', 'Creation', 'Service'], 1321, 206, 28),
    s('comp', 994, 287, 720, 153, 'blue', ['Home & Away', 'Policy', 'Administration'], 1612, 302),
    s('box', 1034, 345, 594, 77, 'violet', ['Policy Creation'], 1329, 360, 8, { k: 'chevron', x: 1611, y: 349 }),
    s('box', 1050, 364, 120, 49, 'mist', ['Calculate Risk'], 1109, 392, 8, { k: 'chevron', x: 1151, y: 368 }),
    s('box', 1196, 364, 116, 49, 'mist', ['Calculate', 'Premium'], 1253, 385, 8, { k: 'chevron', x: 1294, y: 368 }),
    s('box', 1340, 364, 116, 49, 'mist', ['Create Policy'], 1398, 392, 8, { k: 'chevron', x: 1438, y: 368 }),
    s('box', 1484, 364, 116, 49, 'mist', ['Store Policy'], 1541, 392, 8, { k: 'chevron', x: 1582, y: 368 }),
    s('data', 1052, 508, 116, 58, 'cyan', ['Insurance Request', 'Data'], 1109, 532),
    s('data', 1349, 508, 98, 58, 'cyan', ['Insurance Policy', 'Data'], 1397, 532),
    s('data', 1484, 508, 116, 58, 'cyan', ['Customer File', 'Data'], 1541, 532),
  ],
  wires: [
    { d: 'M1321 287V250', end: 'tri', dash: true },
    { d: 'M1171 388H1196', end: 'solid' },
    { d: 'M1313 388H1340', end: 'solid' },
    { d: 'M1457 388H1484', end: 'solid' },
    { d: 'M1109 413V508', end: 'small', dash: true },
    { d: 'M1397 413V508', end: 'small', dash: true },
    { d: 'M1541 413V508', end: 'small', dash: true },
  ],
}

const technical: Sheet = {
  name: 'technical', title: 'Archisurance::Archimate View::Technical Infrastructure View', icon: 'tech', ox: 921, oy: 625, dx: 922, dy: 627,
  groups: [
    { x: 931, y: 712, tab: 324, w: 433, h: 300, title: 'Archisurance', tone: 'leaf' },
    { x: 1468, y: 828, tab: 400, w: 433, h: 124, title: 'Intermediary', tone: 'moss' },
  ],
  shapes: [
    s('box', 950, 645, 116, 40, 'forest', ['Database Service'], 1007, 660, 20),
    s('box', 1094, 645, 116, 40, 'forest', ['File Service'], 1151, 660, 20),
    s('box', 1238, 645, 116, 40, 'forest', ['Network Service'], 1296, 660, 20),
    s('cube', 950, 818, 106, 240, 'forest', ['Mainframe'], 1008, 832),
    s('box', 959, 847, 88, 39, 'mint', ['CICS'], 1002, 862, 0, { k: 'disc', x: 1029, y: 854 }),
    s('box', 959, 895, 88, 39, 'mint', ['DBMS'], 1002, 910, 0, { k: 'disc', x: 1029, y: 902 }),
    s('box', 958, 943, 90, 39, 'mint', ['Message', 'Queing'], 1002, 958, 0, { k: 'disc', x: 1030, y: 950 }),
    s('device', 1103, 760, 97, 52, 'sage', ['NAS File', 'Server'], 1151, 776, 8),
    s('net', 1119, 890, 72, 31, 'sage', ['LAN'], 1151, 905),
    s('cube', 1247, 885, 88, 49, 'rose', ['Firewall'], 1295, 900),
    s('net', 1378, 890, 72, 31, 'sage', ['BIBIT'], 1410, 905),
    s('cube', 1487, 885, 78, 49, 'rose', ['Firewall'], 1530, 900),
    s('net', 1609, 890, 72, 31, 'sage', ['LAN'], 1641, 905),
  ],
  wires: [
    { d: 'M1007 809V685', end: 'tri', dash: true },
    { d: 'M1151 760V685', end: 'tri', dash: true },
    { d: 'M1295 876V685', end: 'tri', dash: true },
    { d: 'M1152 820V884', start: 'sq', end: 'sq' },
    { d: 'M1152 926V1000', start: 'sq' },
    { d: 'M1067 905H1115', start: 'sq', end: 'sq' },
    { d: 'M1189 905H1246', start: 'sq', end: 'sq' },
    { d: 'M1345 905H1374', start: 'sq', end: 'sq' },
    { d: 'M1448 905H1486', start: 'sq', end: 'sq' },
    { d: 'M1576 905H1605', start: 'sq', end: 'sq' },
  ],
}
const sheets = [layered, behaviour, technical]

interface Tone { a: string; b: string; line: string; shade: string; ink: string }
const tones: Record<string, Tone> = {
  gray: { a: '#d9d8da', b: '#a5a4a6', line: '#8e8e8e', shade: '#7c7c7c', ink: '#868686' },
  pale: { a: '#ebebec', b: '#a9a8aa', line: '#8e8e8e', shade: '#7c7c7c', ink: '#868686' },
  soft: { a: '#e2e2e3', b: '#aaa9ab', line: '#8e8e8e', shade: '#7c7c7c', ink: '#868686' },
  dim: { a: '#cfced0', b: '#a3a2a4', line: '#8a8a8a', shade: '#7c7c7c', ink: '#848484' },
  leaf: { a: '#dafcc8', b: '#abcca2', line: '#8fae86', shade: '#7f8a7c', ink: '#82977a' },
  moss: { a: '#cff2c0', b: '#98b492', line: '#8aa682', shade: '#7f8a7c', ink: '#7a9472' },
  red: { a: '#fd8080', b: '#c25a5c', line: '#a85454', shade: '#868484', ink: '#2a1010' },
  yellow: { a: '#fffc80', b: '#c8c45c', line: '#9c9a54', shade: '#807c78', ink: '#1c1c10' },
  lime: { a: '#80ff80', b: '#5cc860', line: '#4c9c4c', shade: '#808080', ink: '#0c2c0c' },
  cream: { a: '#fffcac', b: '#ccc888', line: '#a8bc60', shade: '#088008', ink: '#1c1c10' },
  blue: { a: '#0088c8', b: '#005c90', line: '#00507c', shade: '#86848a', ink: '#04182c' },
  aqua: { a: '#a8fffc', b: '#84c0c0', line: '#6ca0a0', shade: '#808488', ink: '#101c1c' },
  violet: { a: '#8080ff', b: '#5c5cbc', line: '#5454b4', shade: '#00006c', ink: '#0c0c24' },
  mist: { a: '#a8fffc', b: '#84c0c0', line: '#6cb0bc', shade: '#00006c', ink: '#101c1c' },
  cyan: { a: '#00fcfc', b: '#00b8b8', line: '#009090', shade: '#808484', ink: '#042424' },
  forest: { a: '#008444', b: '#006430', line: '#005428', shade: '#7c8c80', ink: '#021c0c' },
  mint: { a: '#acffac', b: '#84c084', line: '#6ca06c', shade: '#000000', ink: '#0c200c' },
  sage: { a: '#acffac', b: '#84c084', line: '#6c9c6c', shade: '#7c8c7c', ink: '#0c200c' },
  rose: { a: '#f88080', b: '#bc5858', line: '#984848', shade: '#7c8478', ink: '#240c0c' },
}
const outline = (n: Shape) => {
  const { x, y, w, h } = n
  if (n.k === 'cube') return `M${x} ${y}l10 -9h${w}v${h - 1}l-10 10h-${w}z`
  return `M${x + 6} ${y}h${w - 7}l-7 ${h}h-${w - 6}z`
}
</script>

<template>
  <div class="app">
    <svg class="defs" width="0" height="0" aria-hidden="true">
      <defs>
        <linearGradient v-for="(t, name) in tones" :id="'g-' + name" :key="name" x1="0" y1="0" x2="0" y2="1">
          <stop offset="0" :stop-color="t.a" /><stop offset="1" :stop-color="t.b" />
        </linearGradient>
        <pattern id="dots" width="48" height="48" patternUnits="userSpaceOnUse"><path :d="dots" fill="#000" /></pattern>
        <marker id="m-open" markerUnits="userSpaceOnUse" orient="auto" overflow="visible" markerWidth="12" markerHeight="12"><path d="M-10 -5L0 0L-10 5" fill="none" stroke="#000" /></marker>
        <marker id="m-small" markerUnits="userSpaceOnUse" orient="auto" overflow="visible" markerWidth="12" markerHeight="12"><path d="M-6 -4L0 0L-6 4" fill="none" stroke="#000" /></marker>
        <marker id="m-solid" markerUnits="userSpaceOnUse" orient="auto" overflow="visible" markerWidth="12" markerHeight="12"><path d="M-7 -4L0 0L-7 4z" /></marker>
        <marker id="m-tri" markerUnits="userSpaceOnUse" orient="auto" overflow="visible" markerWidth="16" markerHeight="16"><path d="M-14 -7L0 0L-14 7z" fill="#fff" stroke="#000" /></marker>
        <marker id="m-sq" markerUnits="userSpaceOnUse" overflow="visible" markerWidth="6" markerHeight="6"><path d="M-2 -2h4v4h-4z" /></marker>
      </defs>
    </svg>

    <header class="titlebar">
      <svg class="ico" viewBox="0 0 16 16" v-html="icons.app"></svg>
      <h1>Archisurance::Archimate View::Technical Infrastructure View - Architect</h1>
      <div class="sysbtns">
        <button aria-label="Minimize"><svg viewBox="0 0 21 21"><path d="M5 14h7v3H5z" fill="#fff" /></svg></button>
        <button aria-label="Maximize"><svg viewBox="0 0 21 21"><path d="M5 5h11v11H5zM5 7h11" fill="none" stroke="#fff" stroke-width="2" /></svg></button>
        <button class="quit" aria-label="Close"><svg viewBox="0 0 21 21"><path d="M6 6l9 9M15 6l-9 9" stroke="#fff" stroke-width="2" /></svg></button>
      </div>
    </header>

    <div class="client">
      <nav class="menubar">
        <i class="grip"></i>
        <button v-for="m in menus" :key="m"><u>{{ m[0] }}</u>{{ m.slice(1) }}</button>
        <i class="sep"></i>
        <button>Debug</button>
      </nav>

      <div class="barrow">
        <div v-for="b in topBars" :key="b.name" class="bar" :class="b.name" role="toolbar" :aria-label="b.name">
          <i class="grip"></i>
          <template v-for="(t, i) in b.items" :key="i">
            <i v-if="t === '|'" class="sep"></i>
            <button v-else :class="{ on: t[0] === '*' }" :aria-label="bare(t)">
              <b v-if="t === '*one'" class="one">1:1</b>
              <svg v-else class="ico" viewBox="0 0 16 16" v-html="icons[bare(t)]"></svg>
            </button>
          </template>
        </div>
      </div>
      <div class="barrow second">
        <div class="bar" role="toolbar" aria-label="shapes">
          <i class="grip"></i>
          <button v-for="t in bars.shapes" :key="t" :aria-label="t"><svg class="ico" viewBox="0 0 16 16" v-html="icons[t]"></svg></button>
        </div>
      </div>

      <main class="main">
        <aside class="side">
          <section v-for="pn in panels" :key="pn.title" class="panel" :class="pn.title.toLowerCase()">
            <h2>{{ pn.title }}
              <button aria-label="Pin"><svg class="ico" viewBox="0 0 16 16" v-html="icons.pin"></svg></button>
              <button aria-label="Close"><svg class="ico" viewBox="0 0 16 16" v-html="icons.close"></svg></button>
            </h2>
            <div class="well">
              <ul class="tree">
                <li v-for="(r, i) in pn.rows" :key="i">
                  <i v-if="r.level > 0" class="pad"></i>
                  <i v-if="r.level > 1" class="pad guide"></i>
                  <i class="node" :class="{ guide: r.level > 0, last: r.last }"><i v-if="r.box" class="toggle" :class="{ plus: r.box === '+' }"></i></i>
                  <i class="dash"></i>
                  <svg class="ico" viewBox="0 0 16 16" v-html="icons[r.icon]"></svg>
                  <span :class="{ selected: r.selected }">{{ r.label }}</span>
                </li>
              </ul>
              <div v-if="pn.scroll" class="hscroll">
                <button aria-label="Scroll left"><svg class="ico" viewBox="0 0 16 16" v-html="icons.chevL"></svg></button>
                <i class="thumb long"></i>
                <button class="end" aria-label="Scroll right"><svg class="ico" viewBox="0 0 16 16" v-html="icons.chevR"></svg></button>
              </div>
            </div>
          </section>

          <section class="panel properties">
            <h2>Properties of Technical Infrastructure View
              <button aria-label="Pin"><svg class="ico" viewBox="0 0 16 16" v-html="icons.pin"></svg></button>
              <button aria-label="Close"><svg class="ico" viewBox="0 0 16 16" v-html="icons.close"></svg></button>
            </h2>
            <div class="tabs"><button class="cur">Properties</button><button>Profiles</button></div>
            <div class="page">
              <div class="gridbox">
                <div class="rows">
                  <table>
                    <thead><tr><th>Property</th><th>Value</th></tr></thead>
                    <tbody>
                      <tr class="sel"><td colspan="2"><i class="toggle"></i><span>Basic profile</span></td></tr>
                      <tr v-for="(r, i) in related" :key="r" class="sub" :class="{ em: i > 0 }"><td colspan="2"><i class="toggle plus"></i><span>{{ r }}</span></td></tr>
                    </tbody>
                  </table>
                  <div class="vscroll">
                    <button aria-label="Scroll up"><svg class="ico" viewBox="0 0 16 16" v-html="icons.chevU"></svg></button>
                    <i class="thumb"></i>
                    <button class="end" aria-label="Scroll down"><svg class="ico" viewBox="0 0 16 16" v-html="icons.chevD"></svg></button>
                  </div>
                </div>
                <div class="hscroll">
                  <button aria-label="Scroll left"><svg class="ico" viewBox="0 0 16 16" v-html="icons.chevL"></svg></button>
                  <i class="thumb short"></i>
                  <button class="end" aria-label="Scroll right"><svg class="ico" viewBox="0 0 16 16" v-html="icons.chevR"></svg></button>
                  <button aria-label="Next column"><svg class="ico" viewBox="0 0 16 16" v-html="icons.chevR"></svg></button>
                </div>
              </div>
              <div class="actions"><button disabled>Default</button><button disabled>Remove</button></div>
            </div>
          </section>
        </aside>

        <section class="work">
          <div class="doctabs">
            <button><i class="slant"></i><svg class="ico" viewBox="0 0 16 16" v-html="icons.layered"></svg>Layered View</button>
            <button class="flat"><svg class="ico" viewBox="0 0 16 16" v-html="icons.behaviour"></svg>Application Behaviour View</button>
            <button class="cur"><i class="slant"></i><svg class="ico" viewBox="0 0 16 16" v-html="icons.tech"></svg>Technical Infrastructure View</button>
            <div class="nav">
              <button aria-label="Previous"><svg viewBox="0 0 12 12"><path d="M8 1v10L4 6z" fill="#fff" stroke="#000" /></svg></button>
              <button aria-label="Next"><svg viewBox="0 0 12 12"><path d="M4 1v10l4-5z" fill="#fff" stroke="#000" /></svg></button>
              <button aria-label="Close"><svg viewBox="0 0 12 12"><path d="M2 3l7 7M9 3l-7 7" stroke="#000" stroke-width="2" /></svg></button>
            </div>
          </div>
          <div class="frame"><div class="desk">
            <article v-for="w in sheets" :key="w.name" class="win" :class="w.name">
              <h3><svg class="ico" viewBox="0 0 16 16" v-html="icons[w.icon]"></svg>{{ w.title }}
                <span v-if="w.scroll" class="sysbtns">
                  <button aria-label="Minimize"><svg viewBox="0 0 21 21"><path d="M4 13h7v3H4z" fill="#fff" /></svg></button>
                  <button aria-label="Maximize"></button>
                  <button aria-label="Close"></button>
                </span>
              </h3>
              <svg class="canvas">
                <g :transform="`translate(${-w.ox},${-w.oy})`">
                  <rect :transform="`translate(${w.dx},${w.dy})`" x="-48" y="-48" width="2400" height="1600" fill="url(#dots)" />
                  <g v-for="g in w.groups" :key="g.title">
                    <path :d="`M${g.x + 3} ${g.y + 3}h${g.tab}v20h${g.w - g.tab}v${g.h - 23 + 3}h-${g.w}z`" :fill="tones[g.tone].shade" />
                    <rect :x="g.x" :y="g.y" :width="g.tab" height="24" :fill="tones[g.tone].a" :stroke="tones[g.tone].line" />
                    <rect :x="g.x + 1" :y="g.y + 1" :width="g.tab - 1" height="23" :fill="tones[g.tone].b" fill-opacity="0.4" />
                    <rect :x="g.x" :y="g.y + 24" :width="g.w" :height="g.h - 24" :fill="`url(#g-${g.tone})`" :stroke="tones[g.tone].line" />
                    <text :x="g.x + 3" :y="g.y + 15" :fill="tones[g.tone].ink">{{ g.title }}</text>
                  </g>
                  <g v-for="(n, i) in w.shapes" :key="i">
                    <template v-if="n.k === 'box' || n.k === 'comp' || n.k === 'data'">
                      <rect :x="n.x + 3" :y="n.y + 3" :width="n.w - 1" :height="n.h" :rx="n.r" :fill="tones[n.tone].shade" />
                      <rect :x="n.x" :y="n.y" :width="n.w" :height="n.h" :rx="n.r" :fill="`url(#g-${n.tone})`" :stroke="tones[n.tone].line" />
                      <template v-if="n.k === 'comp'">
                        <g v-for="py in [9, 28]" :key="py">
                          <rect :x="n.x - 7" :y="n.y + py + 3" width="7" height="11" :fill="tones[n.tone].shade" />
                          <rect :x="n.x - 9" :y="n.y + py" width="19" height="11" :fill="`url(#g-${n.tone})`" :stroke="tones[n.tone].line" />
                          <rect :x="n.x - 8" :y="n.y + py + 1" width="18" height="10" fill="#fff" fill-opacity="0.35" />
                        </g>
                      </template>
                      <path v-if="n.k === 'data'" :d="`M${n.x} ${n.y + 9}h${n.w}`" stroke="#009090" />
                    </template>
                    <template v-else-if="n.k === 'cube'">
                      <path :d="outline(n)" transform="translate(3,3)" :fill="tones[n.tone].shade" />
                      <path :d="outline(n)" :fill="`url(#g-${n.tone})`" :stroke="tones[n.tone].line" />
                      <path :d="`M${n.x} ${n.y}l10 -9h${n.w}l-10 9z`" fill="#fff" fill-opacity="0.38" :stroke="tones[n.tone].line" />
                      <path :d="`M${n.x + n.w} ${n.y}l10 -9v${n.h - 1}l-10 10z`" fill="#000" fill-opacity="0.12" :stroke="tones[n.tone].line" />
                    </template>
                    <template v-else-if="n.k === 'device'">
                      <path :d="`M${n.x + 4} ${n.y + n.h + 9}l8 -8h81l8 8z`" :fill="tones[n.tone].shade" />
                      <rect :x="n.x + 3" :y="n.y + 3" :width="n.w - 1" :height="n.h" :rx="n.r" :fill="tones[n.tone].shade" />
                      <path :d="`M${n.x} ${n.y + n.h + 6}l8 -8h81l8 8z`" :fill="tones[n.tone].b" :stroke="tones[n.tone].line" />
                      <rect :x="n.x" :y="n.y" :width="n.w" :height="n.h" :rx="n.r" :fill="`url(#g-${n.tone})`" :stroke="tones[n.tone].line" />
                    </template>
                    <template v-else>
                      <path :d="outline(n)" transform="translate(3,3)" :fill="tones[n.tone].shade" />
                      <path :d="outline(n)" :fill="`url(#g-${n.tone})`" :stroke="tones[n.tone].line" />
                      <g v-for="(c, j) in [[0, -5], [61, -5], [-6, 24], [55, 24]]" :key="j">
                        <rect :x="n.x + c[0] + 3" :y="n.y + c[1] + 3" width="10" height="10" :fill="tones[n.tone].shade" />
                        <rect :x="n.x + c[0]" :y="n.y + c[1]" width="10" height="10" :fill="j < 2 ? '#b8fcb8' : '#90c490'" :stroke="tones[n.tone].line" />
                      </g>
                    </template>
                    <text v-for="(line, j) in n.text" :key="line" :x="n.tx" :y="n.ty + j * 15" text-anchor="middle" :fill="tones[n.tone].ink">{{ line }}</text>
                    <g v-if="n.glyph" class="glyph" :transform="`translate(${n.glyph.x},${n.glyph.y})`" fill="none" stroke="#1a1a1a" v-html="glyphs[n.glyph.k]"></g>
                  </g>
                  <path v-for="(l, i) in w.wires" :key="'w' + i" :d="l.d" fill="none" stroke="#000" :stroke-dasharray="l.dash ? '4 2' : undefined" :marker-end="l.end && `url(#m-${l.end})`" :marker-start="l.start && `url(#m-${l.start})`" />
                </g>
              </svg>
              <svg v-if="w.name === 'behaviour'" class="cursor" viewBox="0 0 14 22"><path d="M1 1v17l4-4 3 7 3-1-3-7h5z" fill="#fff" stroke="#000" /></svg>
              <div v-if="w.scroll" class="hscroll"><button aria-label="Scroll left"><svg class="ico" viewBox="0 0 16 16" v-html="icons.chevL"></svg></button><i class="thumb wide"></i></div>
            </article>
          </div></div>
        </section>

        <div class="rail">
          <div v-for="(items, bi) in [bars.align, bars.anchor]" :key="bi" class="vbar" role="toolbar">
            <i class="hgrip"></i>
            <template v-for="(t, i) in items" :key="i">
              <i v-if="t === '|'" class="hsep"></i>
              <button v-else :class="{ on: t[0] === '*' }" :aria-label="bare(t)"><svg class="ico" viewBox="0 0 16 16" v-html="icons[bare(t)]"></svg></button>
            </template>
          </div>
        </div>
      </main>

      <div class="format">
        <div class="bar" role="toolbar" aria-label="text">
          <i class="grip"></i>
          <select class="f1" aria-label="Font" disabled></select>
          <select class="f2" aria-label="Style" disabled></select>
          <select class="f3" aria-label="Size" disabled></select>
          <template v-for="(t, i) in bars.text" :key="i">
            <i v-if="t === '|'" class="sep"></i>
            <button v-else :aria-label="t"><svg class="ico" viewBox="0 0 16 16" v-html="icons[t]"></svg></button>
          </template>
        </div>
      </div>
      <footer class="status">
        <span class="hint">For Help, press F1</span>
        <span class="doc">Infrastructure view Technical In</span>
        <span class="file">C:\Program Files\BiZZdesign\Architect 2.2.0\MetaMode</span>
        <span class="user">adrian campbell</span>
        <input type="text" aria-label="Progress" readonly />
        <span class="cell a"></span><span class="cell b"></span><span class="cell c"></span>
        <i class="resize"></i>
      </footer>
    </div>
  </div>
</template>

<style>
body { margin: 0; }
</style>

<style scoped>
* { box-sizing: border-box; }
.app {
  height: 100vh; min-height: 900px; display: flex; flex-direction: column; overflow: hidden;
  background: linear-gradient(90deg, #0024b8, #1458ee 3px, #0a3cd8 50%, #0024b8);
  font: 11px/16px "DejaVu Sans Condensed", "Liberation Sans", sans-serif; color: #000;
}
.defs { position: absolute; }
button { font: inherit; color: inherit; border: 0; padding: 0; margin: 0; background: none; }
i { font-style: normal; }
.ico { width: 16px; height: 16px; flex: none; display: block; overflow: visible; shape-rendering: crispEdges; }

.titlebar {
  height: 30px; flex: none; display: flex; align-items: center; padding: 3px 6px 0 7px; gap: 4px; color: #fff;
  background: linear-gradient(#0a4cc8 0, #2e8cff 2px, #0058ee 7px, #0050e6 14px, #0062fc 22px, #0066ff 27px, #003cd0 30px);
}
h1, h3 { margin: 0; font: bold 13px/16px "Liberation Sans", sans-serif; text-shadow: 1px 1px 0 #0a2a90; white-space: nowrap; }
h1 { flex: 1; padding-top: 2px; }
.sysbtns { display: flex; gap: 2px; }
.sysbtns button { width: 21px; height: 21px; border: 1px solid #fff; border-radius: 3px; background: linear-gradient(135deg, #6a9cf4, #2058d8 40%, #1848c0); }
.sysbtns svg { display: block; width: 19px; height: 19px; }
.sysbtns .quit { background: linear-gradient(135deg, #f09070, #d84820 50%, #b83010); }

.client {
  flex: 1; min-height: 0; margin: 0 4px 4px; display: flex; flex-direction: column;
  background: linear-gradient(90deg, #e8e8de, #e9ebdf 20%, #efe9dd 30%, #eeeddd 65%, #efece4 85%, #f7f1e6);
}
.menubar { height: 23px; display: flex; align-items: center; padding: 2px 0 0 6px; }
.menubar button { padding: 0 8px 0 7px; line-height: 20px; }
.menubar .sep { margin: 0 2px; }
.grip { width: 3px; height: 15px; flex: none; background: radial-gradient(circle, #b8b49c 1px, transparent 1px) 0 0 / 3px 4px; }
.menubar .grip { margin-right: 2px; height: 12px; }
.sep { width: 1px; height: 16px; margin: 0 3px 0 2px; flex: none; background: #c8c4b4; }
.barrow { display: flex; height: 27px; flex: none; padding: 1px 0 0 4px; align-items: flex-start; }
.barrow.second { height: 25px; }
.bar { display: flex; align-items: center; height: 25px; flex: none; padding: 0 2px; border-radius: 3px; background: linear-gradient(#fbfaf5, #eeece0 50%, #d0cebb); border-bottom: 1px solid #b8b59c; }
.second .bar { height: 24px; }
.bar .grip { margin-right: 1px; }
.bar button { width: 22px; height: 22px; display: flex; align-items: center; justify-content: center; flex: none; }
.bar.style { margin-left: 123px; padding-left: 3px; }
.bar.panes { margin-left: 11px; }
.bar.zoom { margin-left: 63px; padding-left: 3px; }
.bar .on, .vbar .on { background: #e2e6f4; border: 1px solid #4a6fb8; }
.one { font: bold 11px/16px "DejaVu Sans Condensed", "Liberation Sans", sans-serif; }

.main { flex: 1; min-height: 0; display: flex; }
.side { width: 252px; flex: none; display: flex; flex-direction: column; gap: 6px; padding-bottom: 4px; }
.panel { display: flex; flex-direction: column; min-height: 0; }
.panel.models { height: 248px; flex: none; }
.panel.views { flex: 1; }
.panel h2 { margin: 0; height: 19px; flex: none; display: flex; align-items: center; padding: 0 2px 0 3px; font: inherit; background: #cfc7bd; white-space: nowrap; }
.panel h2 button:first-of-type { margin-left: auto; }
.panel h2 button .ico { width: 15px; height: 14px; }
.well { flex: 1; min-height: 0; margin: 0 1px; display: flex; flex-direction: column; background: #fff; border: 1px solid #808080; border-right-color: #e8e4d8; border-bottom-color: #e8e4d8; overflow: hidden; }
.tree { list-style: none; margin: 0; padding: 1px 0 0; flex: 1; min-height: 0; overflow: hidden; }
.tree li { display: flex; align-items: center; height: 16px; padding-left: 7px; white-space: nowrap; }
.pad { width: 19px; height: 16px; flex: none; }
.node { width: 9px; height: 16px; flex: none; display: flex; align-items: center; }
.guide { background: repeating-linear-gradient(#aaa 0 1px, transparent 1px 2px) 4px 0 / 1px 16px no-repeat; }
.guide.last { background-size: 1px 8px; }
.toggle { width: 9px; height: 9px; flex: none; border: 1px solid #7b8ea6; border-radius: 1px; background: linear-gradient(#000, #000) 1px 3px / 5px 1px no-repeat, linear-gradient(#fff, #ddd8cc); }
.toggle.plus { background: linear-gradient(#000, #000) 1px 3px / 5px 1px no-repeat, linear-gradient(#000, #000) 3px 1px / 1px 5px no-repeat, linear-gradient(#fff, #ddd8cc); }
.dash { width: 17px; height: 1px; flex: none; background: repeating-linear-gradient(90deg, #999 0 1px, transparent 1px 2px); }
.tree span { padding: 0 3px; margin-left: 2px; }
.tree .selected { background: #ecebe0; }

.hscroll { height: 17px; flex: none; display: flex; align-items: center; padding: 0 1px; gap: 2px; background: #f6f5f0; }
.hscroll button, .vscroll button { width: 16px; height: 16px; flex: none; border: 1px solid #a8bcf0; border-radius: 2px; background: linear-gradient(#dce6fe, #b8c8f8); }
.hscroll .ico, .vscroll .ico { width: 14px; height: 14px; }
.hscroll .end { margin-left: auto; }
.thumb { height: 16px; flex: none; display: flex; align-items: center; justify-content: center; border: 1px solid #98b0ec; border-radius: 2px; background: linear-gradient(#d2defe, #b4c6f8); }
.thumb::after { content: ""; width: 8px; height: 6px; background: repeating-linear-gradient(90deg, #8ca6e0 0 1px, #eef4ff 1px 2px); }
.long { width: 192px; }
.wide { width: 502px; }
.short { width: 16px; }
.vscroll { position: absolute; right: 0; top: 19px; bottom: 0; width: 17px; display: flex; flex-direction: column; background: #f6f5f0; }
.vscroll .thumb { width: 16px; height: 41px; }
.vscroll .thumb::after { width: 6px; height: 8px; background: repeating-linear-gradient(#8ca6e0 0 1px, #eef4ff 1px 2px); }
.vscroll .end { margin-top: auto; }

.properties { flex: none; height: 236px; }
.properties h2 { height: 17px; background: #2c64c8; color: #fff; }
.tabs { display: flex; height: 21px; flex: none; align-items: flex-end; }
.tabs button { height: 19px; padding: 0 3px; border: 1px solid #a8acac; border-bottom: 0; border-radius: 3px 3px 0 0; background: #f8f7f2; }
.tabs .cur { height: 21px; padding: 0 4px 0 6px; border-color: #fcfbf7; border-top: 2px solid #f0a830; background: #fcfbf7; }
.page { flex: 1; min-height: 0; display: flex; flex-direction: column; margin-right: 2px; padding: 12px 5px 1px; background: #fbfaf5; border-right: 1px solid #909090; }
.gridbox { flex: 1; min-height: 0; display: flex; flex-direction: column; border: 1px solid #808078; border-right-color: #e0ddd0; border-bottom-color: #e0ddd0; background: #fff; overflow: hidden; }
.rows { position: relative; flex: 1; min-height: 0; overflow: hidden; }
table { width: 100%; border-collapse: collapse; table-layout: fixed; }
th { height: 19px; padding: 0 0 0 9px; text-align: left; font-weight: normal; background: linear-gradient(#efeee4, #e4e0d0); border-bottom: 1px solid #c8c4b0; }
th:first-child { width: 149px; border-right: 1px solid #c8c4b0; }
td { padding: 0; height: 16px; white-space: nowrap; line-height: 16px; }
td .toggle { display: inline-block; margin: 0 4px 0 8px; vertical-align: 0; }
td span { display: inline-block; height: 16px; padding-left: 1px; vertical-align: top; }
.sel span { width: 198px; background: #316ac5; color: #fff; }
.sub .toggle { margin: 0 5px 0 27px; }
.em span { font-style: italic; }
.actions { display: flex; gap: 9px; justify-content: flex-end; padding-top: 5px; }
.actions button { width: 73px; height: 21px; border: 1px solid #c9c7ba; border-radius: 2px; background: #f5f4ea; color: #a5a293; }

.work { flex: 1; min-width: 0; display: flex; flex-direction: column; padding-left: 4px; }
.doctabs { height: 22px; flex: none; display: flex; align-items: flex-end; position: relative; z-index: 1; }
.doctabs > button { position: relative; display: flex; align-items: center; gap: 2px; height: 18px; border: 1px solid #b4b4b0; border-bottom: 0; border-left: 0; border-radius: 0 3px 0 0; background: #f3f1e8; margin-left: 25px; padding-right: 2px; white-space: nowrap; }
.doctabs .slant { position: absolute; left: -20px; top: -1px; width: 20px; height: 18px; background: linear-gradient(135deg, transparent 49%, #b4b4b0 50%, #f3f1e8 54%); }
.doctabs > .flat { margin-left: 0; padding: 0 0 0 4px; width: 150px; border-right: 0; }
.doctabs > .cur { margin-left: 10px; height: 19px; padding-right: 6px; gap: 3px; font-weight: bold; background: #f2f5fd; border-color: #b0bce0; }
.doctabs .cur .slant { left: -22px; width: 22px; height: 19px; background: linear-gradient(139deg, transparent 49%, #b0bce0 50%, #f2f5fd 54%); }
.nav { margin-left: auto; display: flex; gap: 2px; padding: 0 2px 4px 0; }
.nav svg { display: block; width: 12px; height: 12px; }
.frame { flex: 1; min-height: 0; padding: 3px; border: 1px solid #a4b0dc; background: #dfe5f8; display: flex; }
.desk { flex: 1; position: relative; overflow: hidden; background: #8a96c8; }
.win { position: absolute; display: flex; flex-direction: column; border-left: 6px solid #6c84dc; background: #fff; }
.win h3 { height: 31px; flex: none; display: flex; align-items: center; gap: 4px; margin-left: -1px; padding: 3px 5px 0 0; color: #d6e4fc; text-shadow: none; background: linear-gradient(#6a7ec0, #88a0ea 3px, #7890e0 10px, #7c98e6 20px, #82a4ee 28px, #5c70b4); }
.win h3 .sysbtns { margin-left: auto; }
.layered { left: 0; top: 0; width: 762px; bottom: 0; border-bottom: 5px solid #6c84dc; border-radius: 6px 0 0 0; }
.layered .sysbtns button { background: #3f6fe0; border-color: #c8d8fa; }
.layered .hscroll { width: 762px; }
.behaviour { left: 705px; right: 0; top: 0; bottom: 0; border-radius: 6px 0 0 0; border-left-color: #7484d0; }
.technical { left: 651px; right: 0; top: 463px; bottom: 0; border-left-color: #0a4cdc; border-radius: 6px 0 0 0; }
.technical h3 { color: #fff; text-shadow: 1px 1px 0 #0a2a90; background: linear-gradient(#1048c8, #3c90fc 3px, #0058ee 8px, #0050e6 14px, #0064ff 25px, #0038c0); }
.win, .win h3 { overflow: hidden; }
.canvas { flex: 1; min-height: 0; width: 100%; display: block; font: 12px "Liberation Sans", sans-serif; shape-rendering: crispEdges; }
.canvas .glyph { shape-rendering: auto; }
.cursor { position: absolute; left: 53px; top: 107px; width: 14px; height: 22px; }

.rail { width: 26px; flex: none; padding: 2px 0 0 5px; display: flex; flex-direction: column; gap: 175px; background: #f4f0e4; }
.vbar { display: flex; flex-direction: column; border-radius: 3px; background: linear-gradient(90deg, #fbfaf5, #eeece0 50%, #c8c6b0); }
.vbar button { width: 19px; height: 22px; display: flex; align-items: center; justify-content: center; }
.hgrip { width: 15px; height: 3px; margin: 4px 0 3px 2px; background: radial-gradient(circle, #b8b49c 1px, transparent 1px) 0 0 / 4px 3px; }
.hsep { height: 1px; width: 15px; margin: 3px 2px 2px; background: #c8c4b4; }

.format { height: 27px; flex: none; padding: 3px 0 0 474px; }
.format .bar { width: 601px; height: 24px; padding-left: 3px; }
.format select { height: 20px; border: 1px solid #c9c7ba; border-radius: 0; margin-right: 2px; font: inherit; appearance: none; background: conic-gradient(from 135deg at 50% 100%, #f1efe4 0, #f1efe4 0) #f1efe4; background: linear-gradient(45deg, transparent 50%, #a8a594 50%) right 7px center / 3px 3px no-repeat, linear-gradient(-45deg, transparent 50%, #a8a594 50%) right 4px center / 3px 3px no-repeat, #f1efe4; }
.f1 { width: 99px; } .f2 { width: 151px; } .f3 { width: 50px; }
.status { height: 18px; flex: none; display: flex; align-items: center; border-top: 1px solid #a8a490; background: #ece9d8; white-space: nowrap; padding-right: 2px; }
.hint { flex: 1; padding-left: 1px; }
.doc { width: 284px; }
.file { width: 275px; padding-left: 3px; border-left: 1px solid #c4c0ac; }
.user { width: 83px; padding-left: 3px; }
.status input { width: 154px; height: 15px; border: 1px solid #8c8a80; border-radius: 2px; background: #fff; padding: 0; }
.cell { height: 14px; border-right: 1px solid #c4c0ac; }
.a { width: 27px; } .b { width: 29px; } .c { width: 34px; }
.resize { width: 12px; height: 12px; margin-left: 6px; background: radial-gradient(circle, #b0ac98 1px, transparent 2px) 0 0 / 4px 4px; clip-path: polygon(100% 0, 100% 100%, 0 100%); }
</style>
